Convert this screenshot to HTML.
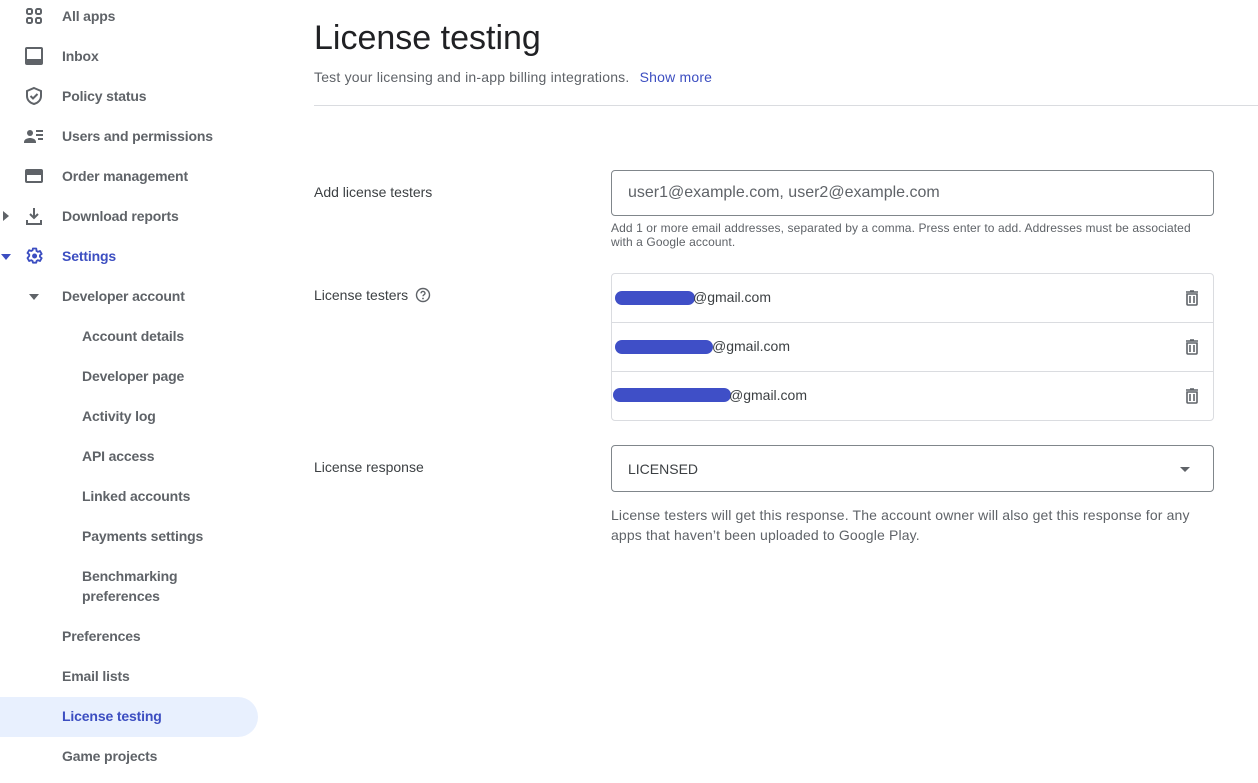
<!DOCTYPE html>
<html><head><meta charset="utf-8"><style>
*{box-sizing:border-box;margin:0;padding:0}
body{width:1258px;height:783px;overflow:hidden;background:#fff;font-family:"Liberation Sans",Arial,sans-serif;color:#3c4043;position:relative}
.it{position:absolute;height:40px;line-height:40px;font-size:14px;color:#5f6368;font-weight:bold;letter-spacing:-0.15px;white-space:nowrap}
.it.l0{left:62px}.it.l1{left:82px}
.ic{position:absolute;left:24px;width:20px;height:20px}
.sel{position:absolute;left:0;top:697px;width:258px;height:40px;background:#e8f0fe;border-radius:0 20px 20px 0}
h1{position:absolute;left:314px;top:19px;font-size:34px;font-weight:normal;color:#202124;white-space:nowrap}
.sub{position:absolute;left:314px;top:69px;font-size:14px;color:#5f6368;white-space:nowrap;letter-spacing:0.2px}
.sub span{color:#3c4ec1;margin-left:6px}
.hr{position:absolute;left:314px;top:105px;width:944px;height:1px;background:#dadce0}
.lbl{position:absolute;left:314px;font-size:14px;color:#3c4043}
.box{position:absolute;left:611px;width:603px;border:1px solid #80868b;border-radius:4px}
.help{position:absolute;left:611px;font-size:12px;color:#5f6368;line-height:14px;width:600px}
.list{position:absolute;left:611px;top:273px;width:603px;height:148px;border:1px solid #dadce0;border-radius:4px}
.row{height:49px;border-bottom:1px solid #dadce0;position:relative;font-size:14px;color:#3c4043}
.row:last-child{border-bottom:none}
.blot{position:absolute;height:14px;background:#3f4fc7;border-radius:7px}
.em{position:absolute;top:15px}
.tr{position:absolute;right:14px;top:16px}
</style></head><body>
<div class="sel"></div>
<svg class="ic" style="top:6px" viewBox="0 0 20 20" fill="none" stroke="#5f6368" stroke-width="2"><rect x="3" y="3" width="5" height="5" rx="1.5"/><rect x="12" y="3" width="5" height="5" rx="1.5"/><rect x="3" y="12" width="5" height="5" rx="1.5"/><rect x="12" y="12" width="5" height="5" rx="1.5"/></svg>
<svg class="ic" style="top:46px" viewBox="0 0 20 20"><rect x="1" y="1" width="18" height="18" rx="2" fill="#5f6368"/><rect x="3" y="3" width="14" height="10" fill="#fff"/></svg>
<svg class="ic" style="top:86px" viewBox="0 0 20 20" fill="none" stroke="#5f6368" stroke-width="2"><path d="M10 2l7 3v5c0 4-3 7-7 8-4-1-7-4-7-8V5z"/><path d="M6.5 10l2.5 2.5 4.5-4.5"/></svg>
<svg class="ic" style="top:126px" viewBox="0 0 20 20" fill="#5f6368"><circle cx="6" cy="7" r="3"/><path d="M0 16c0-3 4-4 6-4s6 1 6 4v1H0z"/><rect x="12" y="4" width="7" height="2"/><rect x="12" y="8" width="7" height="2"/><rect x="14" y="12" width="5" height="2"/></svg>
<svg class="ic" style="top:166px" viewBox="0 0 20 20"><rect x="1" y="3" width="18" height="14" rx="2" fill="#5f6368"/><rect x="3" y="9" width="14" height="6" fill="#fff"/></svg>
<svg class="ic" style="top:206px" viewBox="0 0 20 20" fill="none" stroke="#5f6368" stroke-width="2"><path d="M10 2v10M6 8l4 4 4-4M3 14v4h14v-4"/></svg>
<svg style="position:absolute;left:3px;top:210px" width="6" height="12" viewBox="0 0 6 12"><path d="M0 1l6 5-6 5z" fill="#5f6368"/></svg>
<svg class="ic" style="top:246px" viewBox="0 0 24 24"><path fill="none" stroke="#3c4ec1" stroke-width="2.2" stroke-linejoin="round" d="M19.1 12.9a7 7 0 000-1.8l2.1-1.6-2-3.5-2.5 1a7 7 0 00-1.6-.9L14.7 3h-4l-.4 2.1a7 7 0 00-1.6.9l-2.5-1-2 3.5 2.1 1.6a7 7 0 000 1.8L4.2 14.5l2 3.5 2.5-1a7 7 0 001.6.9l.4 2.1h4l.4-2.1a7 7 0 001.6-.9l2.5 1 2-3.5z"/><circle cx="12.7" cy="12" r="3" fill="#3c4ec1"/></svg>
<svg style="position:absolute;left:1px;top:254px" width="10" height="6"><path d="M0 0h10L5 6z" fill="#3c4ec1"/></svg>
<svg style="position:absolute;left:29px;top:294px" width="10" height="6"><path d="M0 0h10L5 6z" fill="#5f6368"/></svg>
<div class="it l0" style="top:-4px">All apps</div>
<div class="it l0" style="top:36px">Inbox</div>
<div class="it l0" style="top:76px">Policy status</div>
<div class="it l0" style="top:116px">Users and permissions</div>
<div class="it l0" style="top:156px">Order management</div>
<div class="it l0" style="top:196px">Download reports</div>
<div class="it l0" style="top:236px;color:#3c4ec1">Settings</div>
<div class="it l0" style="top:276px">Developer account</div>
<div class="it l1" style="top:316px">Account details</div>
<div class="it l1" style="top:356px">Developer page</div>
<div class="it l1" style="top:396px">Activity log</div>
<div class="it l1" style="top:436px">API access</div>
<div class="it l1" style="top:476px">Linked accounts</div>
<div class="it l1" style="top:516px">Payments settings</div>
<div class="it l1" style="top:566px;line-height:20px">Benchmarking<br>preferences</div>
<div class="it l0" style="top:616px">Preferences</div>
<div class="it l0" style="top:656px">Email lists</div>
<div class="it l0" style="top:696px;color:#3c4ec1">License testing</div>
<div class="it l0" style="top:736px">Game projects</div>

<h1>License testing</h1>
<div class="sub">Test your licensing and in-app billing integrations. <span>Show more</span></div>
<div class="hr"></div>

<div class="lbl" style="top:184px">Add license testers</div>
<div class="box" style="top:170px;height:46px;padding:13px 16px;font-size:16px;color:#5f6368">user1@example.com, user2@example.com</div>
<div class="help" style="top:221px;letter-spacing:0.1px">Add 1 or more email addresses, separated by a comma. Press enter to add. Addresses must be associated with a Google account.</div>

<div class="lbl" style="top:287px">License testers <svg width="16" height="16" viewBox="0 0 16 16" style="vertical-align:-3px;margin-left:3px"><circle cx="8" cy="8" r="6.5" fill="none" stroke="#5f6368" stroke-width="1.4"/><path d="M6 6.3a2 2 0 114 .2c0 1.2-2 1.2-2 2.7" fill="none" stroke="#5f6368" stroke-width="1.4"/><circle cx="8" cy="11.5" r=".9" fill="#5f6368"/></svg></div>
<div class="list">
<div class="row"><div class="blot" style="left:3px;top:17px;width:80px"></div><div class="em" style="left:81px">@gmail.com</div><svg class="tr" width="14" height="16" viewBox="0 0 14 16"><path d="M2 4h10v10a1 1 0 01-1 1H3a1 1 0 01-1-1zM1 2h12M5 1h4M5 6v7M9 6v7" fill="none" stroke="#5f6368" stroke-width="1.6"/></svg></div>
<div class="row"><div class="blot" style="left:3px;top:17px;width:98px"></div><div class="em" style="left:100px">@gmail.com</div><svg class="tr" width="14" height="16" viewBox="0 0 14 16"><path d="M2 4h10v10a1 1 0 01-1 1H3a1 1 0 01-1-1zM1 2h12M5 1h4M5 6v7M9 6v7" fill="none" stroke="#5f6368" stroke-width="1.6"/></svg></div>
<div class="row"><div class="blot" style="left:1px;top:16px;width:118px"></div><div class="em" style="left:117px">@gmail.com</div><svg class="tr" width="14" height="16" viewBox="0 0 14 16"><path d="M2 4h10v10a1 1 0 01-1 1H3a1 1 0 01-1-1zM1 2h12M5 1h4M5 6v7M9 6v7" fill="none" stroke="#5f6368" stroke-width="1.6"/></svg></div>
</div>

<div class="lbl" style="top:459px">License response</div>
<div class="box" style="top:445px;height:47px;padding:15px 16px;font-size:14px;color:#3c4043">LICENSED<svg style="position:absolute;right:23px;top:21px" width="10" height="5"><path d="M0 0h10L5 5z" fill="#5f6368"/></svg></div>
<div class="help" style="top:505px;font-size:14px;line-height:20px;color:#5f6368;letter-spacing:0.15px">License testers will get this response. The account owner will also get this response for any apps that haven’t been uploaded to Google Play.</div>
</body></html>
